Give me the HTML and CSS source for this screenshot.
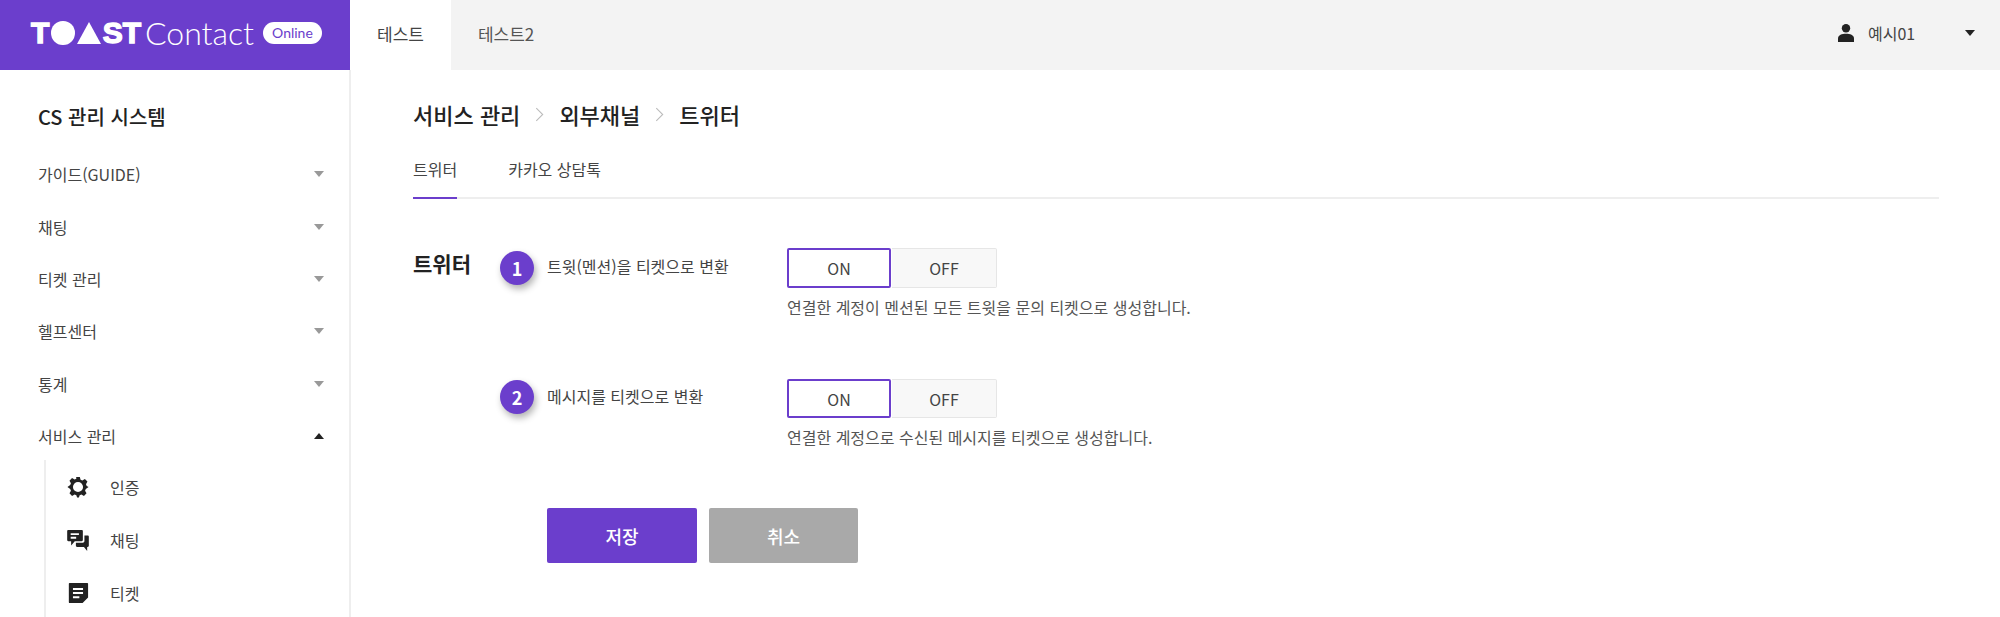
FILE: index.html
```html
<!DOCTYPE html>
<html lang="ko">
<head>
  <meta charset="UTF-8" />
  <title>TOAST Contact</title>
  <link rel="stylesheet" href="styles.css">
</head>
<body>
  <!-- 상단 헤더 -->
  <header class="header">
    <div class="logo">
      <span class="logo-mark">T<i class="logo-disc"></i><i class="logo-tri"></i>ST</span>
      <span class="logo-name">Contact</span>
      <span class="logo-pill">Online</span>
    </div>
    <nav class="top-tabs">
      <a class="top-tab active">테스트</a>
      <a class="top-tab">테스트2</a>
    </nav>
    <div class="user">
      <svg class="user-icon" viewBox="0 0 16 18"><circle cx="8" cy="4.2" r="4.2"/><path d="M0 18v-3.5C0 11 4 9.800 8 9.800s8 1.200 8 4.700V18z"/></svg>
      <span class="user-name">예시01</span>
      <span class="caret caret-down dark"></span>
    </div>
  </header>

  <div class="page">
    <!-- 왼쪽 메뉴 -->
    <aside class="sidebar">
      <h2 class="side-title">CS 관리 시스템</h2>
      <ul class="menu">
        <li class="menu-item">가이드(GUIDE)<span class="caret caret-down"></span></li>
        <li class="menu-item">채팅<span class="caret caret-down"></span></li>
        <li class="menu-item">티켓 관리<span class="caret caret-down"></span></li>
        <li class="menu-item">헬프센터<span class="caret caret-down"></span></li>
        <li class="menu-item">통계<span class="caret caret-down"></span></li>
        <li class="menu-item">서비스 관리<span class="caret caret-up"></span></li>
      </ul>
      <ul class="submenu">
        <li class="sub-item">
          <svg class="sub-icon" viewBox="0 0 24 24"><path fill-rule="evenodd" d="M10 1h4l.8 3.100 1.900.8 2.800-1.600 2.800 2.800-1.600 2.800.8 1.900L23.500 12l-3 2.200-.8 1.900 1.600 2.800-2.800 2.800-2.800-1.600-1.900.8L13 23.500h-2l-.8-2.600-1.900-.8-2.800 1.600-2.800-2.800 1.600-2.800-.8-1.900L.5 12l3-2.200.8-1.900-1.600-2.800 2.800-2.800 2.800 1.600 1.900-.8zM12 6.500a5.500 5.500 0 1 0 0 11 5.500 5.500 0 0 0 0-11z"/></svg>
          인증
        </li>
        <li class="sub-item">
          <svg class="sub-icon" viewBox="0 0 24 24"><path fill-rule="evenodd" d="M1.500 1h14.500c.8 0 1.300.5 1.300 1.300V12c0 .8-.5 1.300-1.300 1.300H8.500L4.500 18v-4.700h-3C.7 13.300.2 12.800.2 12V2.300C.2 1.500.7 1 1.500 1zM4 4.500v2h9v-2zm0 4v2h6v-2z"/><path d="M19 7h3.500c.8 0 1.300.5 1.300 1.300v10c0 .8-.5 1.300-1.300 1.300H22V24l-3.500-4.400H11c-.8 0-1.300-.5-1.300-1.300V15h7.500c1 0 1.800-.8 1.800-1.800z"/></svg>
          채팅
        </li>
        <li class="sub-item">
          <svg class="sub-icon" viewBox="0 0 24 24"><path fill-rule="evenodd" d="M3 1h19c.5 0 1 .5 1 1v15l-6 6H3c-.5 0-1-.5-1-1V2c0-.5.5-1 1-1zm3.500 5.500v2.200h11V6.500zm0 4.500v2.200h11V11zm0 4.500v2.200h7v-2.200z"/></svg>
          티켓
        </li>
      </ul>
    </aside>

    <!-- 본문 -->
    <main class="content">
      <div class="breadcrumb">
        <span>서비스 관리</span>
        <svg class="crumb-arrow" viewBox="0 0 8 14"><path d="M1 1l6 6-6 6"/></svg>
        <span>외부채널</span>
        <svg class="crumb-arrow" viewBox="0 0 8 14"><path d="M1 1l6 6-6 6"/></svg>
        <span>트위터</span>
      </div>

      <div class="tabs">
        <a class="tab active">트위터</a>
        <a class="tab">카카오 상담톡</a>
      </div>

      <section class="section">
        <h3 class="section-title">트위터</h3>
        <div class="options">
          <div class="option">
            <span class="badge">1</span>
            <span class="option-label">트윗(멘션)을 티켓으로 변환</span>
            <div class="option-control">
              <div class="toggle">
                <button class="toggle-btn on">ON</button>
                <button class="toggle-btn">OFF</button>
              </div>
              <p class="option-desc">연결한 계정이 멘션된 모든 트윗을 문의 티켓으로 생성합니다.</p>
            </div>
          </div>
          <div class="option">
            <span class="badge">2</span>
            <span class="option-label">메시지를 티켓으로 변환</span>
            <div class="option-control">
              <div class="toggle">
                <button class="toggle-btn on">ON</button>
                <button class="toggle-btn">OFF</button>
              </div>
              <p class="option-desc">연결한 계정으로 수신된 메시지를 티켓으로 생성합니다.</p>
            </div>
          </div>
          <div class="actions">
            <button class="btn btn-save">저장</button>
            <button class="btn btn-cancel">취소</button>
          </div>
        </div>
      </section>
    </main>
  </div>
</body>
</html>
```

FILE: styles.css
```css
* {
  box-sizing: border-box;
}

html, body {
  height: 100%;
}

body {
  margin: 0;
  display: flex;
  flex-direction: column;
  overflow: hidden;
  font-family: "Noto Sans CJK KR", "Noto Sans", sans-serif;
  font-size: 16px;
  color: #333;
  background-color: #fff;
}

ul {
  list-style: none;
  margin: 0;
  padding: 0;
}

/* 헤더 */
.header {
  display: flex;
  flex: none;
  height: 70px;
  background-color: #f3f3f3;
}

.logo {
  display: flex;
  align-items: center;
  width: 350px;
  padding-left: 31px;
  padding-bottom: 5px;
  color: #fff;
  background-color: #6b3ecc;
}

.logo-mark {
  display: flex;
  align-items: center;
  gap: 2px;
  width: 110px;
  font-family: "Liberation Sans", sans-serif;
  font-size: 30px;
  font-weight: 700;
  line-height: 1;
  -webkit-text-stroke: 1.4px #fff;
}

.logo-disc {
  width: 24px;
  height: 24px;
  border-radius: 50%;
  background-color: #fff;
}

.logo-tri {
  width: 0;
  height: 0;
  border-left: 12px solid transparent;
  border-right: 12px solid transparent;
  border-bottom: 22px solid #fff;
}

.logo-name {
  margin-left: 4px;
  font-family: "Lato", sans-serif;
  font-size: 32px;
  font-weight: 300;
}

.logo-pill {
  margin-left: 9px;
  padding: 0 9px;
  height: 22px;
  border-radius: 11px;
  font-family: "Lato", sans-serif;
  font-size: 14px;
  line-height: 22px;
  color: #6b3ecc;
  background-color: #fff;
}

.top-tabs {
  display: flex;
}

.top-tab {
  display: flex;
  align-items: center;
  padding: 0 27px 4px;
  font-size: 17px;
  color: #555;
}

.top-tab.active {
  color: #444;
  background-color: #fff;
}

.user {
  display: flex;
  align-items: center;
  margin-left: auto;
  padding-right: 25px;
  padding-bottom: 4px;
}

.user-icon {
  width: 16px;
  height: 18px;
  fill: #222;
}

.user-name {
  width: 97px;
  margin-left: 14px;
  color: #444;
}

/* 화살표 */
.caret {
  display: block;
  width: 0;
  height: 0;
  border-left: 5px solid transparent;
  border-right: 5px solid transparent;
}

.caret-down {
  border-top: 6px solid #999;
}

.caret-down.dark {
  border-top-color: #222;
}

.caret-up {
  border-bottom: 6px solid #222;
}

/* 레이아웃 */
.page {
  display: flex;
  flex: 1;
  min-height: 0;
}

.sidebar {
  flex: none;
  width: 351px;
  padding: 32px 25px 0 38px;
  border-right: 2px solid #eee;
}

.side-title {
  margin: 0 0 16px;
  font-size: 20px;
  font-weight: 500;
  line-height: 30px;
  color: #222;
}

.menu-item {
  display: flex;
  justify-content: space-between;
  align-items: center;
  height: 52.4px;
  color: #444;
}

.submenu {
  margin: 15px 0 0 6px;
  padding-left: 21px;
  border-left: 2px solid #eee;
}

.sub-item {
  display: flex;
  align-items: center;
  gap: 21px;
  height: 53px;
  color: #444;
}

.sub-item:first-child {
  margin-top: -17px;
}

.sub-icon {
  width: 22px;
  height: 22px;
  fill: #222;
}

/* 본문 */
.content {
  flex: 1;
  padding: 26px 61px 0 62px;
}

.breadcrumb {
  display: flex;
  align-items: center;
  gap: 15px;
  height: 36px;
  font-size: 22px;
  font-weight: 500;
  color: #222;
}

.crumb-arrow {
  width: 9px;
  height: 15px;
  fill: none;
  stroke: #bbb;
  stroke-width: 1;
}

.tabs {
  display: flex;
  gap: 51px;
  height: 59px;
  margin-top: 8px;
  border-bottom: 2px solid #eee;
}

.tab {
  height: 59px;
  padding-top: 17px;
  color: #444;
}

.tab.active {
  border-bottom: 2px solid #6b3ecc;
}

.section {
  display: flex;
  margin-top: 49px;
}

.section-title {
  flex: none;
  width: 87px;
  margin: 0;
  font-size: 21px;
  font-weight: 700;
  line-height: 30px;
  color: #222;
}

.options {
  display: flex;
  flex-direction: column;
}

.option {
  display: flex;
  align-items: flex-start;
  height: 131px;
}

.badge {
  flex: none;
  width: 34px;
  height: 34px;
  margin-top: 3px;
  border-radius: 50%;
  font-size: 18px;
  font-weight: 700;
  line-height: 34px;
  text-align: center;
  color: #fff;
  background-color: #6b3ecc;
  box-shadow: 2px 4px 7px rgba(0, 0, 0, 0.3);
}

.option-label {
  flex: none;
  width: 240px;
  margin-left: 13px;
  line-height: 36px;
  color: #444;
}

.option + .option .badge {
  margin-top: 1px;
}

.option + .option .option-label {
  line-height: 34px;
}

.toggle {
  display: flex;
}

.toggle-btn {
  width: 105px;
  height: 40px;
  padding: 0;
  border: 1px solid #e6e6e6;
  border-left: none;
  border-radius: 0 2px 2px 0;
  font: inherit;
  color: #444;
  background-color: #f8f8f8;
}

.option + .option .toggle-btn {
  height: 39px;
}

.toggle-btn.on {
  width: 104px;
  margin-right: 1px;
  border: 2px solid #6b3ecc;
  border-radius: 2px;
  background-color: #fff;
}

.option-desc {
  margin: 6px 0 0;
  line-height: 26px;
  color: #555;
}

.actions {
  display: flex;
  gap: 12px;
  margin: -2px 0 0 47px;
}

.btn {
  width: 150px;
  height: 55px;
  border: none;
  border-radius: 2px;
  font: inherit;
  font-size: 18px;
  font-weight: 500;
  color: #fff;
}

.btn-save {
  background-color: #6b3ecc;
}

.btn-cancel {
  width: 149px;
  background-color: #a9a9a9;
}
```
